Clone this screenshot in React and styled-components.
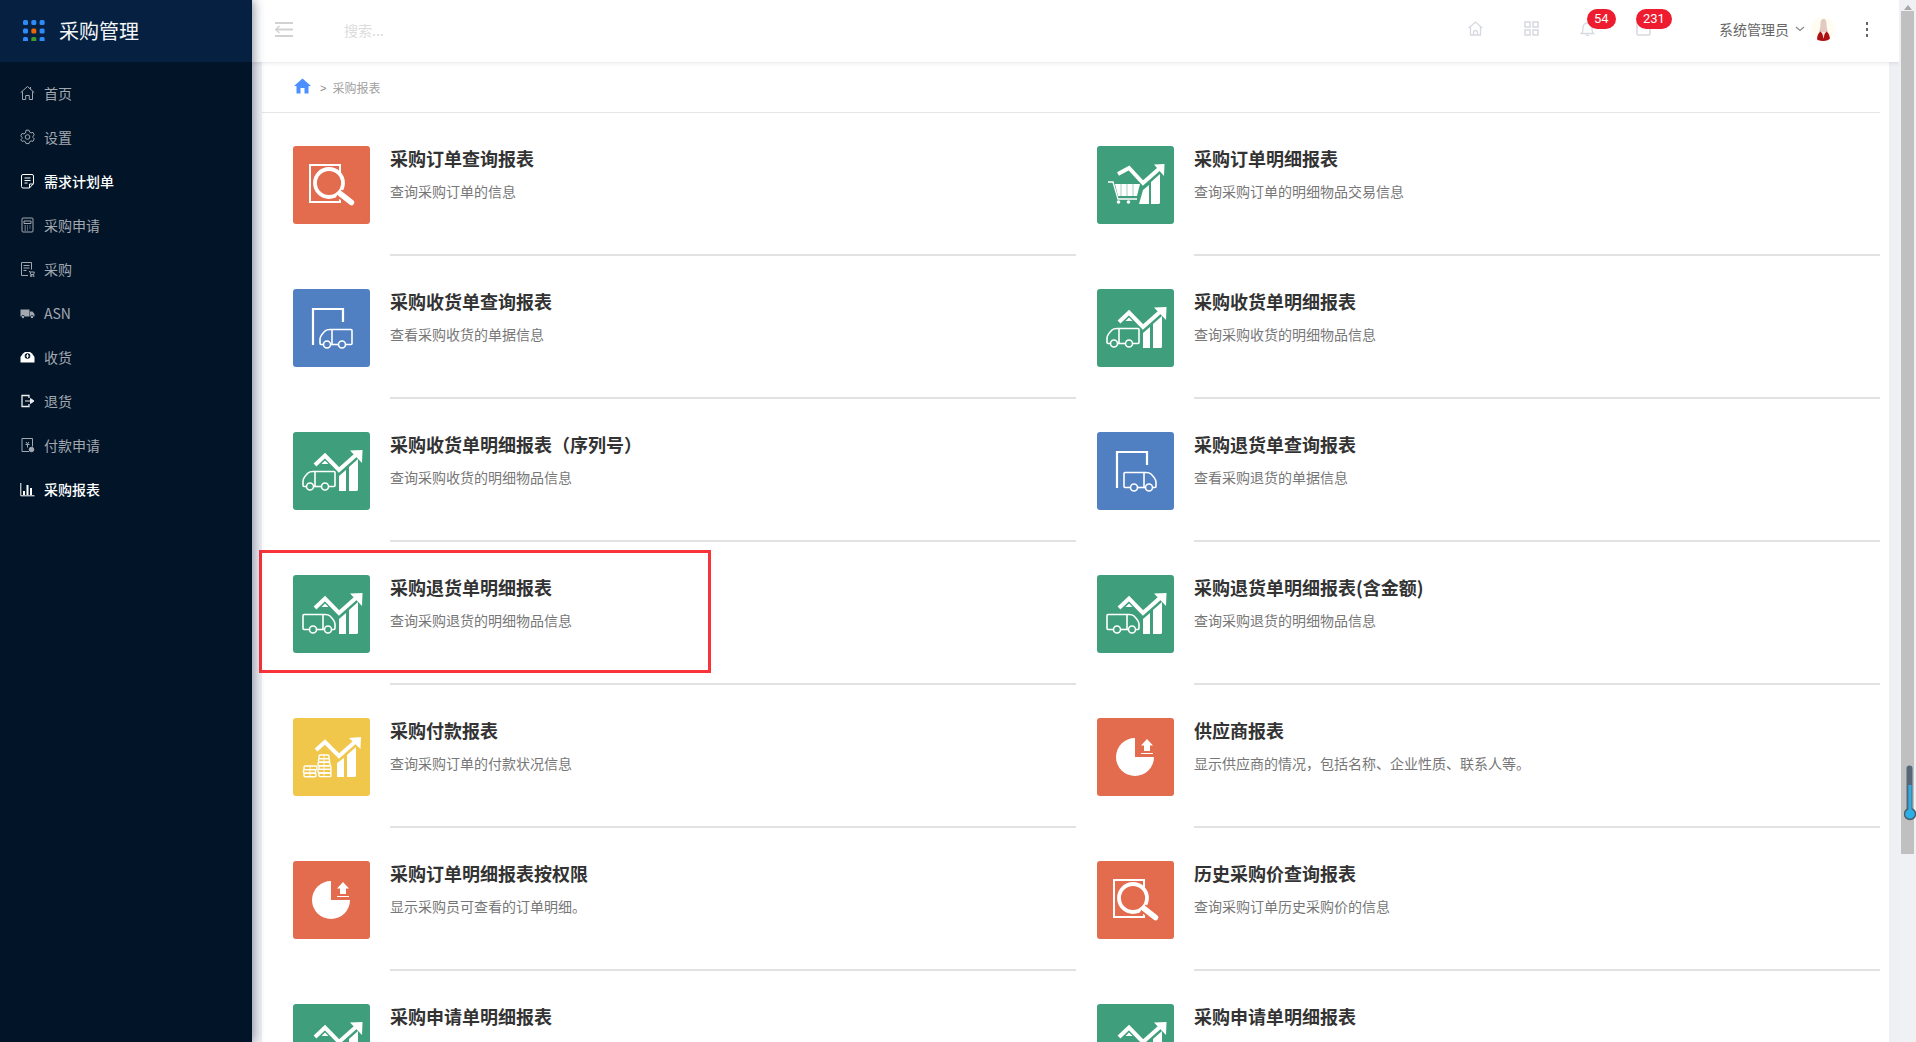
import React from 'react';
import styled, { createGlobalStyle } from 'styled-components';

const Global = createGlobalStyle`
  html, body { margin: 0; padding: 0; height: 100%; overflow: hidden; }
  body { font-family: "Noto Sans CJK SC", "Liberation Sans", sans-serif; background: #eff0f4; }
  #root { height: 100%; }
`;

const Shell = styled.div`display: flex; height: 1042px; overflow: hidden; position: relative;`;
const Sidebar = styled.aside`
  width: 252px; flex: none; background: #011428; position: relative; z-index: 3;
  box-shadow: 2px 0 10px rgba(20, 30, 60, .45);
`;
const Brand = styled.div`
  height: 62px; background: #052041; display: flex; align-items: center; padding: 0 0 2px 23px; gap: 14px;
  color: #f4f6f8; font-size: 20px; box-sizing: border-box;
`;
const Nav = styled.nav`padding-top: 9px;`;
const NavItem = styled.div`
  height: 44px; display: flex; align-items: center; font-size: 14px; padding-left: 20px; gap: 9px;
  color: ${p => (p.$active ? '#ffffff' : '#a3a8b0')};
  font-weight: ${p => (p.$active ? 500 : 400)};
  svg { flex: none; }
`;
const Main = styled.div`flex: 1; min-width: 0; display: flex; flex-direction: column;`;
const Topbar = styled.header`
  height: 62px; flex: none; background: #fff; display: flex; align-items: center; position: relative; z-index: 2;
  box-shadow: 0 1px 4px rgba(30, 40, 70, .12);
`;
const Menu = styled.div`margin: -3px 0 0 23px; display: flex;`;
const Search = styled.div`margin: -2px 0 0 51px; color: #dcdcdc; font-size: 14px; flex: 1; line-height: 20px;`;
const TopIcon = styled.div`
  width: 56px; height: 24px; display: flex; align-items: center; justify-content: center; position: relative; margin-top: -6px;
`;
const Badge = styled.span`
  position: absolute; top: -7px; left: ${p => p.$left}px; height: 20px; border-radius: 10px; padding: 0 ${p => p.$pad}px;
  background: #ed1c2e; color: #fff; font: 13px/20px Roboto, "Liberation Sans", sans-serif;
`;
const User = styled.div`
  margin-left: 48px; display: flex; align-items: center; color: #666; font-size: 14px; margin-top: -4px;
`;
const Avatar = styled.div`
  width: 24px; height: 24px; border-radius: 50%; background: #fffdf1; margin-left: 6px; overflow: hidden;
  display: flex; align-items: flex-end; justify-content: center;
`;
const Chevron = styled.svg`margin-left: 6px;`;
const Dots = styled.div`margin: -4px 31px 0 31px; display: flex; flex-direction: column; gap: 3px;`;
const Dot = styled.i`width: 2px; height: 3px; background: #666; display: block;`;
const Body = styled.div`flex: 1; padding: 0 10px; min-height: 0;`;
const Panel = styled.main`background: #fff; height: 100%; position: relative;`;
const Crumbs = styled.div`
  height: 51px; margin-right: 9px; box-sizing: border-box; border-bottom: 1px solid #e6e6e6; padding: 0 0 3px 32px; display: flex; align-items: center;
  font-size: 12px; color: #a0a0a0;
`;
const Sep = styled.span`margin: 4px 6px 0 9px; font-family: "Liberation Sans", sans-serif; font-size: 11px; color: #888;`;
const CrumbText = styled.span`margin-top: 4px;`;
const Grid = styled.div`
  display: grid; grid-template-columns: 783px 783px; column-gap: 21px; padding-left: 31px; position: relative;
`;
const Card = styled.div`display: flex; height: 143px; gap: 20px;`;
const Tile = styled.div`
  width: 77px; height: 78px; border-radius: 3px; margin-top: 33px; flex: none; background: ${p => p.$c};
  svg { display: block; }
`;
const CardText = styled.div`
  flex: 1; box-sizing: border-box; border-bottom: 2px solid #e2e2e2; padding-top: 31px; height: 143px;
`;
const Title = styled.div`font-size: 18px; line-height: 28px; font-weight: 700; color: #333;`;
const Sub = styled.div`font-size: 14px; line-height: 20px; margin-top: 9px; color: #777;`;
const Mark = styled.div`
  position: absolute; left: -3px; top: 437px; width: 452px; height: 123px; box-sizing: border-box; border: 3px solid #f8343a; pointer-events: none;
`;
const Track = styled.div`width: 17px; flex: none; background: #f0f1f4; position: relative; z-index: 4; display: flex; flex-direction: column; align-items: center;`;
const Arrow = styled.div`
  margin-top: 5px; border: 4px solid transparent; border-top: 0; border-bottom: 5px solid #a8a8a8; width: 0; height: 0;
`;
const Thumb = styled.div`width: 13px; height: 843px; margin-top: 1px; background: #c0c0c0;`;
const Thermo = styled.svg`position: absolute; left: 5px; top: 765px;`;

const ORANGE = '#e36b4e', GREEN = '#3f9f7d', BLUE = '#5180c2', YELLOW = '#f0c74b';

const Zig = ({ x = 22 }) => (
  <g>
    <polyline points={`${x},33 32,23.5 46,38 64,22`} fill="none" stroke="#fff" strokeWidth="4" />
    <polygon points="57,18.5 69.5,18 69,31" fill="#fff" />
    <polygon points="32,28.5 35.5,32 28.5,32" fill="#fff" />
    <polygon points="46,44 53,38 53,59 46,59" fill="#fff" />
    <polygon points="56,35 65,27 65,58 64,59 56,59" fill="#fff" />
  </g>
);
const TruckShape = () => (
  <g fill="none" stroke="#fff" strokeWidth="1.6">
    <path d="M13 54.500 H11 Q10 54.500 10 53 V49 Q10 46 15 41 Q16.500 39.500 20 39.500 H41 Q42 39.500 42 40.500 V53.500 Q42 54.500 41 54.500 H35.500" />
    <path d="M21 54.500 H28.500" />
    <path d="M22 39.500 V54.500" />
    <circle cx="17" cy="54.500" r="3.500" />
    <circle cx="32" cy="54.500" r="3.500" />
  </g>
);
const Magnifier = ({ bg }) => (
  <svg width="77" height="78" viewBox="0 0 77 78">
    <path d="M17 19 H47 V56 H17 Z" fill="none" stroke="#fff" strokeWidth="2" />
    <circle cx="36" cy="37" r="14" fill={bg} stroke="#fff" strokeWidth="3.800" />
    <path d="M46 47 L59 57.500" stroke={bg} strokeWidth="9" />
    <path d="M47 47.500 L58.500 56.500" stroke="#fff" strokeWidth="5.500" strokeLinecap="round" />
  </svg>
);
const GateTruck = ({ flip }) => (
  <svg width="77" height="78" viewBox="0 0 77 78">
    <path d="M20 56 V20 H50 V33" fill="none" stroke="#fff" strokeWidth="2.200" />
    <g transform={flip ? 'translate(69,1) scale(-1,1)' : 'translate(17,1)'}><TruckShape /></g>
  </svg>
);
const ChartTruck = ({ flip }) => (
  <svg width="77" height="78" viewBox="0 0 77 78">
    <g transform={flip ? 'translate(52,0) scale(-1,1)' : undefined}><TruckShape /></g>
    <Zig />
  </svg>
);
const ChartCart = () => (
  <svg width="77" height="78" viewBox="0 0 77 78">
    <polyline points="21,28 32,22 46,37 63,22" fill="none" stroke="#fff" strokeWidth="4" />
    <polygon points="57,18.500 67.500,18 67,30" fill="#fff" />
    <path d="M11 36 H16 L21 53 H40" fill="none" stroke="#fff" strokeWidth="1.300" />
    <polygon points="18,38 43,38 40,50 21,50" fill="#fff" />
    <path d="M24 38 V50 M30 38 V50 M36 38 V50" stroke={GREEN} strokeWidth=".5" />
    <circle cx="21.500" cy="56" r="1.800" fill="#fff" />
    <circle cx="31.500" cy="56" r="1.800" fill="#fff" />
    <polygon points="42,58 46,44 52,39 52,58" fill="#fff" />
    <polygon points="54,36 63,28 63,57 62,58 54,58" fill="#fff" />
  </svg>
);
const Coins = () => (
  <g fill="none" stroke="#fff" strokeWidth="1.400">
    <rect x="11" y="48" width="13" height="3.600" rx="1.200" />
    <rect x="10.500" y="51.600" width="12" height="3.600" rx="1.200" />
    <rect x="11" y="55.200" width="12" height="3.600" rx="1.200" />
    <rect x="26" y="37" width="10" height="3.600" rx="1.200" />
    <rect x="25.500" y="40.600" width="11" height="3.600" rx="1.200" />
    <rect x="25" y="44.200" width="12" height="3.600" rx="1.200" />
    <rect x="26" y="47.800" width="12" height="3.600" rx="1.200" />
    <rect x="25" y="51.400" width="13" height="3.600" rx="1.200" />
    <rect x="26" y="55" width="12" height="3.600" rx="1.200" />
    <path d="M17 48 V59 M31 37 V59" strokeWidth=".8" />
  </g>
);
const ChartCoins = () => (
  <svg width="77" height="78" viewBox="0 0 77 78">
    <Coins />
    <polyline points="23,32 32,24 46,38 63,23" fill="none" stroke="#fff" strokeWidth="4" />
    <polygon points="56,20 68,19 67.500,31" fill="#fff" />
    <polygon points="44,45 51,40 51,59 44,59" fill="#fff" />
    <polygon points="54,37 63,29 63,58 62,59 54,59" fill="#fff" />
  </svg>
);
const Pie = () => (
  <svg width="77" height="78" viewBox="0 0 77 78">
    <path d="M38 20 A19 19 0 1 0 57 39 H38 Z" fill="#fff" />
    <polygon points="50,21 56,27.500 53,27.500 53,33 47,33 47,27.500 44,27.500" fill="#fff" />
    <path d="M44 35.500 H56" stroke="#fff" strokeWidth="1" />
  </svg>
);

const rows = [
  [ORANGE, <Magnifier bg={ORANGE} />, '采购订单查询报表', '查询采购订单的信息'],
  [GREEN, <ChartCart />, '采购订单明细报表', '查询采购订单的明细物品交易信息'],
  [BLUE, <GateTruck />, '采购收货单查询报表', '查看采购收货的单据信息'],
  [GREEN, <ChartTruck />, '采购收货单明细报表', '查询采购收货的明细物品信息'],
  [GREEN, <ChartTruck />, '采购收货单明细报表（序列号）', '查询采购收货的明细物品信息'],
  [BLUE, <GateTruck flip />, '采购退货单查询报表', '查看采购退货的单据信息'],
  [GREEN, <ChartTruck flip />, '采购退货单明细报表', '查询采购退货的明细物品信息'],
  [GREEN, <ChartTruck flip />, '采购退货单明细报表(含金额)', '查询采购退货的明细物品信息'],
  [YELLOW, <ChartCoins />, '采购付款报表', '查询采购订单的付款状况信息'],
  [ORANGE, <Pie />, '供应商报表', '显示供应商的情况，包括名称、企业性质、联系人等。'],
  [ORANGE, <Pie />, '采购订单明细报表按权限', '显示采购员可查看的订单明细。'],
  [ORANGE, <Magnifier bg={ORANGE} />, '历史采购价查询报表', '查询采购订单历史采购价的信息'],
  [GREEN, <ChartTruck />, '采购申请单明细报表', ''],
  [GREEN, <ChartTruck />, '采购申请单明细报表', ''],
];

const Ico = ({ children, fill = 'none' }) => (
  <svg width="15" height="16" viewBox="0 0 15 16" fill={fill} stroke={fill === 'none' ? 'currentColor' : 'none'} strokeWidth="1">{children}</svg>
);
const navs = [
  ['首页', <Ico><path d="M.7 7.600 7.500 1.500l6.800 6.100M2.500 6.500V14.500h3.200v-4h3.600v4h3.200V6.500M10.500 2v2.200" /></Ico>],
  ['设置', <Ico><circle cx="7.500" cy="8" r="2.300" /><path d="M6 1.800h3l.5 1.800 1.600.9 1.800-.5 1.400 2.500-1.300 1.400v1.200l1.300 1.400-1.400 2.500-1.800-.5-1.600.9-.5 1.800H6l-.5-1.800-1.600-.9-1.800.5L.7 11.500 2 10.100V8.900L.7 7.500l1.400-2.500 1.800.5 1.600-.9z" transform="translate(0 -.6)" /></Ico>],
  ['需求计划单', <Ico><path d="M3 1.500h9a1.500 1.500 0 0 1 1.500 1.500v7.500l-4 4.500H3A1.500 1.500 0 0 1 1.500 13.500V3A1.500 1.500 0 0 1 3 1.500zM4.500 5h6M4.500 7.500h6M4.500 10h3M9.500 15v-4h4" /></Ico>, true],
  ['采购申请', <Ico><rect x="2" y="1" width="11" height="14" rx="1" /><path d="M4 4h7v2.500H4zM4.500 9h1.500M7 9h1M9.500 9h1M4.500 11h1.500M7 11h1M9.500 11h1M4.500 13h1.500M7 13h1" /></Ico>],
  ['采购', <Ico><path d="M8 14.500H1.500v-13h10v7M3.500 4.500h6M3.500 7h6M3.500 9.500h3" /><path d="M9 10.500h1l.7 3h3l.6-2.500h-4" /><circle cx="11" cy="15" r=".7" /><circle cx="13.500" cy="15" r=".7" /></Ico>],
  ['ASN', <svg width="15" height="16" viewBox="0 0 15 16"><path d="M.5 4.500h9v7H4.500a1.500 1.500 0 0 0-3 0h-1zM10 6.500h2.500l2 2.500v2.500h-1a1.500 1.500 0 0 0-3 0H10z" fill="currentColor" /><circle cx="3" cy="12" r="1.200" fill="currentColor" /><circle cx="12" cy="12" r="1.200" fill="currentColor" /></svg>],
  ['收货', <svg width="15" height="16" viewBox="0 0 15 16"><path d="M3 4.500 5 3h5l2 1.500L14.500 8v5.500H.5V8z" fill="#fff" /><circle cx="7.500" cy="7" r="2.800" fill="#011428" /><path d="M7.500 5v4M5.800 7h3.400" stroke="#fff" strokeWidth="1" /></svg>],
  ['退货', <Ico><path d="M9 5V2.500H2v11h7V11" strokeWidth="1.300" stroke="#eee" /><path d="M5 8h5.500V5.500L14 8l-3.500 2.500V8" fill="#eee" stroke="#eee" /></Ico>],
  ['付款申请', <Ico><path d="M9 14.500H2v-13h10.500v8M6 5l1.500 2L9 5M5.500 7.500h4M7.500 7.500v3" /><circle cx="11.500" cy="12.500" r="2.300" fill="currentColor" /></Ico>],
  ['采购报表', <svg width="15" height="16" viewBox="0 0 15 16"><path d="M.8 2v12.800h13.700" fill="none" stroke="#fff" /><path d="M3 10h2v4H3zM6.500 4h2v10h-2zM10 7h2v7h-2z" fill="#fff" /></svg>, true],
];

export default function App() {
  return (
    <Shell>
      <Global />
      <Sidebar>
        <Brand>
          <svg width="22" height="21" viewBox="0 0 22 21">
            {[0, 8, 16].map((y, r) => [0, 8.3, 16.6].map((x, c) => (
              <rect key={`${r}${c}`} x={x} y={y + (r === 0 ? 0 : r === 1 ? .5 : 1)} width="5" height="5" rx="1.500"
                fill={r === 1 && c === 1 ? '#e4670c' : r === 2 && c === 1 ? '#3e9a2e' : '#2f8bf5'} />
            )))}
          </svg>
          采购管理
        </Brand>
        <Nav>
          {navs.map(([t, icon, on]) => <NavItem key={t} $active={on}>{icon}{t}</NavItem>)}
        </Nav>
      </Sidebar>
      <Main>
        <Topbar>
          <Menu>
            <svg width="18" height="15" viewBox="0 0 18 15">
              <path d="M0 1h18M1.500 7.500h16.500M0 14h18" stroke="#d2d2d2" strokeWidth="2" fill="none" />
              <path d="M4.500 4 .8 7.500 4.500 11" stroke="#d2d2d2" strokeWidth="1.500" fill="none" />
            </svg>
          </Menu>
          <Search>搜索...</Search>
          <TopIcon>
            <svg width="15" height="15" viewBox="0 0 15 15" fill="none" stroke="#d6d9e0" strokeWidth="1.300">
              <path d="M.7 7 7.500 1l6.800 6M2.500 6v8h10V6M5.500 14v-2.500a2 2 0 0 1 4 0V14" />
            </svg>
          </TopIcon>
          <TopIcon>
            <svg width="15" height="15" viewBox="0 0 15 15" fill="none" stroke="#d6d9e0" strokeWidth="1.500">
              <rect x="1" y="1" width="5" height="5" /><rect x="9" y="1" width="5" height="5" /><rect x="1" y="9" width="5" height="5" /><rect x="9" y="9" width="5" height="5" />
            </svg>
          </TopIcon>
          <TopIcon>
            <svg width="15" height="15" viewBox="0 0 15 15" fill="none" stroke="#d6d9e0" strokeWidth="1.300">
              <path d="M1.500 12.500c1.500-1 1.500-2.500 1.500-6a4.500 4.500 0 0 1 9 0c0 3.500 0 5 1.500 6zM6 14.500h3" />
            </svg>
            <Badge $left={28} $pad={7}>54</Badge>
          </TopIcon>
          <TopIcon>
            <svg width="15" height="15" viewBox="0 0 15 15" fill="none" stroke="#d6d9e0" strokeWidth="1.500">
              <rect x="1" y="1" width="13" height="13" rx="1" />
            </svg>
            <Badge $left={21} $pad={7}>231</Badge>
          </TopIcon>
          <User>
            系统管理员
            <Chevron width="10" height="6" viewBox="0 0 10 6"><path d="M1 1l4 3.500L9 1" fill="none" stroke="#888" strokeWidth="1.200" /></Chevron>
            <Avatar>
              <svg width="15" height="23" viewBox="0 0 15 23">
                <path d="M7.500 1c2.500 0 3 2.500 3 5 0 3 1 6 1.500 8H3c.5-2 1.500-5 1.500-8 0-2.500.5-5 3-5z" fill="#e4c9c0" />
                <path d="M1 23c0-5 1-8 3.500-9.500L7.500 17l3-3.500C13 15 14 18 14 23z" fill="#ae0f12" />
                <path d="M6 14h3L7.500 21z" fill="#f4e4dc" />
              </svg>
            </Avatar>
          </User>
          <Dots><Dot /><Dot /><Dot /></Dots>
        </Topbar>
        <Body>
          <Panel>
            <Crumbs>
              <svg width="17" height="16" viewBox="0 0 17 16"><path d="M8.500.5 17 8h-2.500v7.500H10.500V10h-4v5.500h-4V8H0z" fill="#4c8fff" /></svg>
              <Sep>&gt;</Sep>
              <CrumbText>采购报表</CrumbText>
            </Crumbs>
            <Grid>
              {rows.map(([c, icon, t, s], i) => (
                <Card key={i}>
                  <Tile $c={c}>{icon}</Tile>
                  <CardText>
                    <Title>{t}</Title>
                    {s && <Sub>{s}</Sub>}
                  </CardText>
                </Card>
              ))}
              <Mark />
            </Grid>
          </Panel>
        </Body>
      </Main>
      <Track>
        <Arrow />
        <Thumb />
        <Thermo width="12" height="56" viewBox="0 0 12 56">
          <rect x="2.500" y="0.500" width="6" height="48" rx="3" fill="#566878" />
          <circle cx="6" cy="49" r="5.500" fill="#2eaee6" stroke="#4d5f6e" strokeWidth="1.500" />
          <rect x="4.500" y="20" width="3" height="26" fill="#2eaee6" />
        </Thermo>
      </Track>
    </Shell>
  );
}
